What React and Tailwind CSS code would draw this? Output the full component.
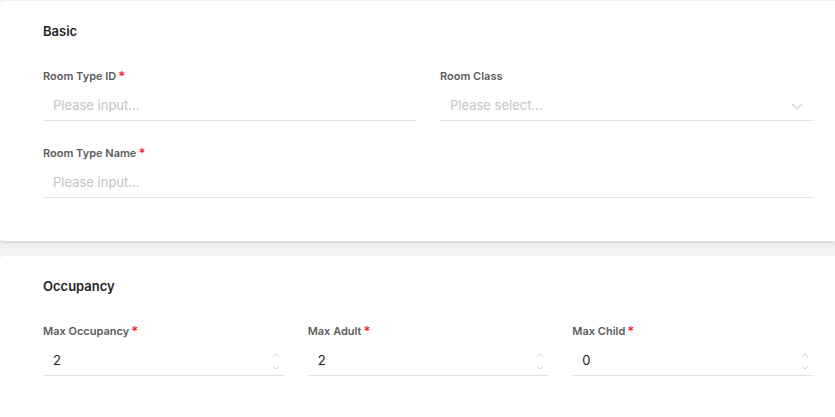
import React from 'react';

const font = { fontFamily: 'Inter, "Noto Sans", sans-serif' };

function Label({ children, required }) {
  return (
    <div className="flex items-center h-[18px] text-[11px] font-semibold text-[#5c5c5c] leading-none">
      <span>{children}</span>
      {required && <span className="ml-[2px] text-[#f5222d] text-[13px]">*</span>}
    </div>
  );
}

function TextField({ label, required, placeholder }) {
  return (
    <div className="flex flex-col gap-[4px]">
      <Label required={required}>{label}</Label>
      <div className="flex items-center h-[32px] border-b border-[#e4e4e4] pl-[10px] pt-[3px]">
        <span className="text-[13px] text-[#c4c4c4]">{placeholder}</span>
      </div>
    </div>
  );
}

function SelectField({ label, placeholder }) {
  return (
    <div className="flex flex-col gap-[4px]">
      <Label>{label}</Label>
      <div className="flex items-center justify-between h-[32px] border-b border-[#e4e4e4] pl-[10px] pr-[11px] pt-[3px]">
        <span className="text-[13px] text-[#c4c4c4]">{placeholder}</span>
        <svg width="12" height="7" viewBox="0 0 12 7" fill="none">
          <path d="M1 1l5 5 5-5" stroke="#d0d0d0" strokeWidth="1.1" />
        </svg>
      </div>
    </div>
  );
}

function NumberField({ label, value }) {
  return (
    <div className="flex flex-col gap-[4px]">
      <Label required>{label}</Label>
      <div className="flex items-center justify-between h-[32px] border-b border-[#e4e4e4] pl-[10px] pr-[5px] pt-[3px]">
        <span className="text-[13px] text-[#222]">{value}</span>
        <div className="flex flex-col gap-[7px]">
          <svg width="8" height="5" viewBox="0 0 8 5" fill="none">
            <path d="M1 4l3-3 3 3" stroke="#d4d4d4" strokeWidth="1" />
          </svg>
          <svg width="8" height="5" viewBox="0 0 8 5" fill="none">
            <path d="M1 1l3 3 3-3" stroke="#d4d4d4" strokeWidth="1" />
          </svg>
        </div>
      </div>
    </div>
  );
}

export default function App() {
  return (
    <div className="w-[835px] h-[417px] overflow-hidden bg-[#f2f2f2] pt-px" style={font}>
      {/* Basic */}
      <div className="bg-white rounded-l-[4px] shadow-[0_2px_4px_rgba(0,0,0,0.12)] pl-[43px] pr-[21px] pt-[22px] pb-[43px]">
        <h3 className="h-[18px] flex items-center text-[13px] font-semibold text-[#1f1f1f]">Basic</h3>
        <div className="mt-[26px] grid grid-cols-2 gap-x-[23px]">
          <TextField label="Room Type ID" required placeholder="Please input..." />
          <SelectField label="Room Class" placeholder="Please select..." />
        </div>
        <div className="mt-[23px]">
          <TextField label="Room Type Name" required placeholder="Please input..." />
        </div>
      </div>

      {/* Occupancy */}
      <div className="mt-[15px] bg-white rounded-l-[4px] pl-[43px] pr-[21px] pt-[22px] pb-[44px]">
        <h3 className="h-[18px] flex items-center text-[13px] font-semibold text-[#1f1f1f]">Occupancy</h3>
        <div className="mt-[26px] grid grid-cols-3 gap-x-[23px]">
          <NumberField label="Max Occupancy" value="2" />
          <NumberField label="Max Adult" value="2" />
          <NumberField label="Max Child" value="0" />
        </div>
      </div>
    </div>
  );
}
